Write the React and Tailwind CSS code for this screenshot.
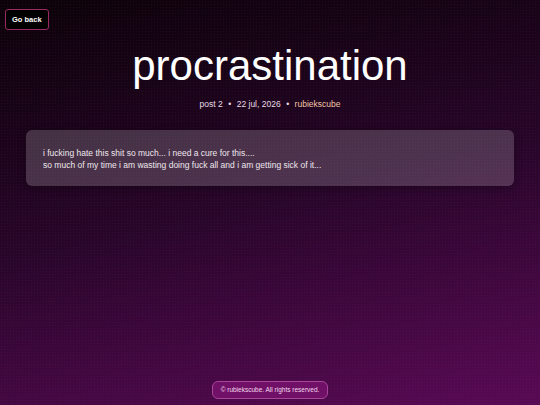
import React from "react";

const Post = () => {
  return (
    <div
      className="relative w-[540px] h-[405px] overflow-hidden text-white bg-[linear-gradient(168deg,#0b0208_0%,#28062a_50%,#580a54_100%)]"
      style={{ fontFamily: '"Liberation Sans", Arial, sans-serif' }}
    >
      {/* dotted texture */}
      <div className="absolute inset-0 bg-[radial-gradient(rgba(255,80,200,0.07)_1px,transparent_1px)] bg-[length:3px_3px]" />

      <div className="relative flex flex-col h-full">
        <div className="pt-[5px] pl-[5px]">
          <button className="h-[21px] px-[6px] rounded-[3px] border border-[#9a2a62] bg-black text-[7.5px] font-bold leading-none text-white">
            Go back
          </button>
        </div>

        <h1 className="mt-[12px] text-center text-[42px] leading-[48px] font-normal">
          procrastination
        </h1>

        <div className="mt-[8px] flex justify-center items-center gap-[5.5px] text-[8.5px] text-[#e8dce4]">
          <span>post 2</span>
          <span>•</span>
          <span>22 jul, 2026</span>
          <span>•</span>
          <span className="text-[#f2c6a6]">rubiekscube</span>
        </div>

        <div className="mx-[26px] mt-[19px] h-[56px] rounded-[6px] bg-[#ffffff2e] px-[17px] pt-[17px] text-[8.5px] leading-[12px] text-[#eee6ec] shadow-[0_2px_8px_rgba(0,0,0,0.3)]">
          <p>i fucking hate this shit so much... i need a cure for this....</p>
          <p>so much of my time i am wasting doing fuck all and i am getting sick of it...</p>
        </div>

        <div className="mt-auto mb-[6px] flex justify-center">
          <div className="h-[18px] px-[8px] flex items-center rounded-[6px] border border-[#a8449a] bg-[#701066] text-[6.5px] text-[#f4d8ee]">
            © rubiekscube. All rights reserved.
          </div>
        </div>
      </div>
    </div>
  );
};

export default function App() {
  return <Post />;
}
